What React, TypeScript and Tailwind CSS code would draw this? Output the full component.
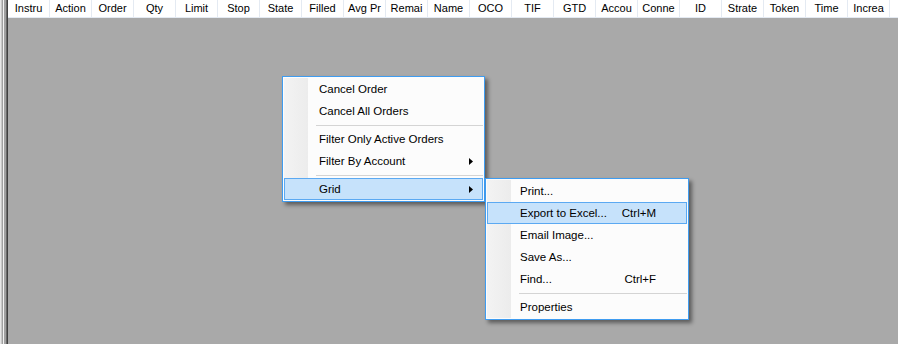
import React from "react";

const columns = [
  "Instru", "Action", "Order", "Qty", "Limit", "Stop", "State", "Filled", "Avg Pr", "Remai", "Name",
  "OCO", "TIF", "GTD", "Accou", "Conne", "ID", "Strate", "Token", "Time", "Increa",
];

type Entry =
  | { kind: "item"; label: string; shortcut?: string; sub?: boolean; active?: boolean }
  | { kind: "sep" };

const mainMenu: Entry[] = [
  { kind: "item", label: "Cancel Order" },
  { kind: "item", label: "Cancel All Orders" },
  { kind: "sep" },
  { kind: "item", label: "Filter Only Active Orders" },
  { kind: "item", label: "Filter By Account", sub: true },
  { kind: "sep" },
  { kind: "item", label: "Grid", sub: true, active: true },
];

const gridMenu: Entry[] = [
  { kind: "item", label: "Print..." },
  { kind: "item", label: "Export to Excel...", shortcut: "Ctrl+M", active: true },
  { kind: "item", label: "Email Image..." },
  { kind: "item", label: "Save As..." },
  { kind: "item", label: "Find...", shortcut: "Ctrl+F" },
  { kind: "sep" },
  { kind: "item", label: "Properties" },
];

function Arrow() {
  return (
    <svg width="4" height="7" viewBox="0 0 4 7" className="block -mt-[2px]">
      <polygon points="0,0 4,3.5 0,7" fill="#000" />
    </svg>
  );
}

// Win7-style context menu; offsets come from the screenshot
function ContextMenu({ entries, className, textPad }: { entries: Entry[]; className: string; textPad: string }) {
  return (
    <div
      className={`absolute border border-[#3f9cf0] bg-[#fcfcfc] p-px shadow-[3px_3px_4px_rgba(0,0,0,0.45)] ${className}`}
    >
      <div className="absolute left-px top-px bottom-px w-[24px] bg-gradient-to-r from-[#f3f3f3] to-[#ececec]" />
      <div className="relative flex flex-col">
        {entries.map((e, i) =>
          e.kind === "sep" ? (
            <div key={i} className="h-[6px] flex items-center pl-[32px]">
              <div className="h-px w-full bg-[#d4d4d4]" />
            </div>
          ) : (
            <div
              key={i}
              className={`h-[22px] flex items-center border pt-[2px] ${
                e.active ? "border-[#5ba9f2] bg-[#c6e2fb]" : "border-transparent"
              } ${textPad} pr-[9px]`}
            >
              <span className="flex-1 whitespace-nowrap">{e.label}</span>
              {e.shortcut && <span className="whitespace-nowrap mr-[21px]">{e.shortcut}</span>}
              {e.sub && <Arrow />}
            </div>
          )
        )}
      </div>
    </div>
  );
}

export default function App() {
  return (
    <div
      className="relative w-[898px] h-[344px] flex overflow-hidden bg-[#a9a9a9] text-black"
      style={{ fontFamily: '"Liberation Sans", Arial, sans-serif' }}
    >
      {/* window frame on the left */}
      <div className="flex h-full">
        <div className="w-px bg-[#e6e6e6]" />
        <div className="w-px bg-[#c8c8c8]" />
        <div className="w-px bg-[#a0a0a0]" />
        <div className="w-px bg-[#f2f2f2]" />
        <div className="w-px bg-[#a0a0a0]" />
        <div className="w-px bg-[#a0a0a0]" />
        <div className="w-px bg-[#6a6a6a]" />
        <div className="w-px bg-[#404040]" />
      </div>

      <div className="flex-1 flex flex-col">
        <div className="h-[18px] flex bg-white border-b border-[#e4eaf2] text-[11px]">
          {columns.map((c) => (
            <div
              key={c}
              className="w-[42px] shrink-0 flex items-center justify-center border-r border-[#e4eaf2] whitespace-nowrap overflow-hidden"
            >
              {c}
            </div>
          ))}
          <div className="flex-1" />
        </div>
        <div className="flex-1 bg-[#a9a9a9]" />
      </div>

      <ContextMenu entries={mainMenu} className="left-[282px] top-[76px] w-[203px] text-[11.5px]" textPad="pl-[34px]" />
      <ContextMenu entries={gridMenu} className="left-[485px] top-[178px] w-[204px] text-[11.5px]" textPad="pl-[32px]" />
    </div>
  );
}
